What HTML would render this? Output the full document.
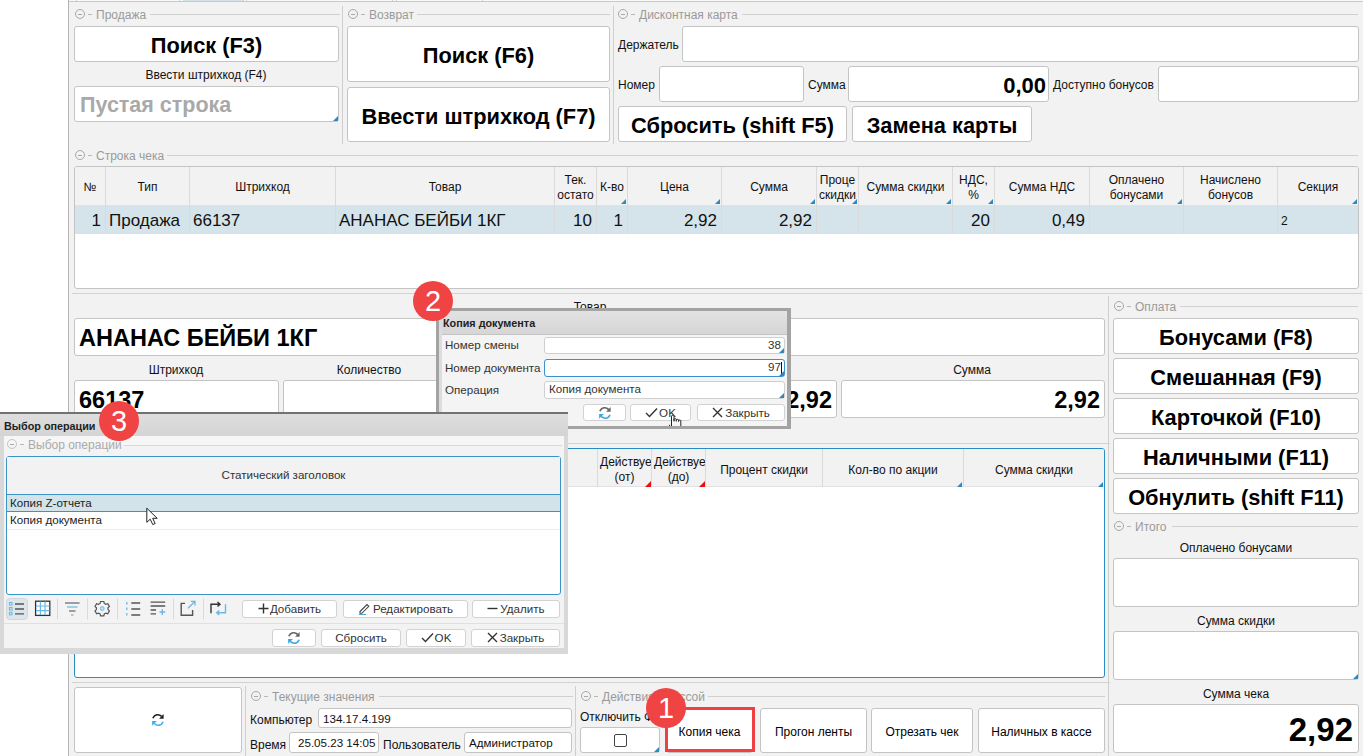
<!DOCTYPE html>
<html><head><meta charset="utf-8">
<style>
*{box-sizing:border-box;margin:0;padding:0}
html,body{width:1363px;height:756px;overflow:hidden;background:#fff;font-family:"Liberation Sans",sans-serif;color:#111}
.a{position:absolute}
#main{position:absolute;left:68px;top:0;width:1295px;height:756px;background:#f2f2f2;border-left:1px solid #b4b4b4}
.hl{position:absolute;height:1px;background:#d2d2d2}
.vl{position:absolute;width:1px;background:#cfcfcf}
.gt{position:absolute;height:14px;font-size:12px;color:#9a9a9a;white-space:nowrap;line-height:14px}
.gt .ic{position:absolute;left:0;top:2px;width:10px;height:10px;border:1px solid #a8a8a8;border-radius:50%}
.gt .ic:after{content:"";position:absolute;left:2px;top:3.5px;width:4px;height:1px;background:#a8a8a8}
.gt .ds{position:absolute;left:13px;top:7px;width:4px;height:1px;background:#b8b8b8}
.gt .tx{position:absolute;left:21px;top:1px}
.gt .ln{position:absolute;top:7px;height:1px;background:#d0d0d0;right:0}
.btn{position:absolute;background:#fff;border:1px solid #c4c4c4;border-radius:3px;font-weight:bold;font-size:21.8px;padding-top:2px;text-align:center;white-space:nowrap;color:#000}
.inp{position:absolute;background:#fff;border:1px solid #c4c4c4;border-radius:3px;white-space:nowrap;overflow:hidden}
.lbl{position:absolute;font-size:12px;white-space:nowrap;color:#111;line-height:14px}
.tri{position:absolute;width:0;height:0;border-style:solid;border-width:0 0 5px 5px;border-color:transparent transparent #2a8ac2 transparent}
.trir{position:absolute;width:0;height:0;border-style:solid;border-width:0 0 6px 6px;border-color:transparent transparent #e81010 transparent}
.th{position:absolute;font-size:12px;color:#111;text-align:center;line-height:15.5px;overflow:hidden;white-space:nowrap;padding:0 2px}
.td{position:absolute;font-size:17px;color:#111;line-height:20px;white-space:nowrap}
.cs{position:absolute;width:1px;background:#dadada}
.badge{position:absolute;width:40px;height:40px;border-radius:50%;background:#f04344;color:#fff;font-size:29px;text-align:center;line-height:40px}
.dl{font-family:"Liberation Sans",sans-serif}
</style></head><body>
<div id="main"></div>
<!-- top strip -->
<div class="a" style="left:69px;top:0;width:1294px;height:1px;background:#fafafa"></div>
<div class="a" style="left:183px;top:0;width:60px;height:1px;background:#d4e4ea"></div>
<div class="a" style="left:69px;top:1px;width:1294px;height:1px;background:#c8c8c8"></div>
<div class="a" style="left:76px;top:0;width:1px;height:1px;background:#d0d0d0"></div>
<div class="a" style="left:179px;top:0;width:1px;height:1px;background:#d0d0d0"></div>
<div class="a" style="left:243px;top:0;width:1px;height:1px;background:#d0d0d0"></div>
<div class="a" style="left:246px;top:0;width:1px;height:1px;background:#d0d0d0"></div>
<div class="a" style="left:392px;top:0;width:1px;height:1px;background:#d0d0d0"></div>
<div class="a" style="left:396px;top:0;width:1px;height:1px;background:#d0d0d0"></div>
<div class="a" style="left:482px;top:0;width:1px;height:1px;background:#d0d0d0"></div>

<div class="gt" style="left:75px;top:7px;width:265px"><div class="ic"></div><div class="ds"></div><div class="tx">Продажа</div><div class="ln" style="left:75px"></div></div>
<div class="btn" style="left:74px;top:26px;width:265px;height:36px;line-height:34px;">Поиск (F3)</div>
<div class="lbl" style="left:56px;width:300px;text-align:center;top:68px;">Ввести штрихкод (F4)</div>
<div class="inp" style="left:74px;top:86px;width:265px;height:36px;"><div style="position:absolute;left:5px;top:6px;font-weight:bold;font-size:21.5px;color:#a9a9a9">Пустая строка</div></div>
<div class="tri" style="left:333px;top:116px"></div>
<div class="vl" style="left:342px;top:6px;height:138px"></div>
<div class="gt" style="left:348px;top:7px;width:262px"><div class="ic"></div><div class="ds"></div><div class="tx">Возврат</div><div class="ln" style="left:69px"></div></div>
<div class="btn" style="left:347px;top:26px;width:263px;height:56px;line-height:54px;">Поиск (F6)</div>
<div class="btn" style="left:347px;top:87px;width:263px;height:55px;line-height:53px;">Ввести штрихкод (F7)</div>
<div class="vl" style="left:613px;top:6px;height:138px"></div>
<div class="gt" style="left:618px;top:7px;width:740px"><div class="ic"></div><div class="ds"></div><div class="tx">Дисконтная карта</div><div class="ln" style="left:124px"></div></div>
<div class="lbl" style="left:618px;top:38px;">Держатель</div>
<div class="inp" style="left:682px;top:26px;width:677px;height:36px;"></div>
<div class="lbl" style="left:618px;top:78px;">Номер</div>
<div class="inp" style="left:659px;top:66px;width:145px;height:36px;"></div>
<div class="lbl" style="left:808px;top:78px;">Сумма</div>
<div class="inp" style="left:848px;top:66px;width:201px;height:36px;"><div style="position:absolute;right:2px;top:6px;font-weight:bold;font-size:22px;color:#000">0,00</div></div>
<div class="lbl" style="left:1053px;top:78px;">Доступно бонусов</div>
<div class="inp" style="left:1158px;top:66px;width:201px;height:36px;"></div>
<div class="btn" style="left:618px;top:106px;width:229px;height:36px;line-height:34px;">Сбросить (shift F5)</div>
<div class="btn" style="left:852px;top:106px;width:180px;height:36px;line-height:34px;">Замена карты</div>
<div class="gt" style="left:75px;top:148px;width:1283px"><div class="ic"></div><div class="ds"></div><div class="tx">Строка чека</div><div class="ln" style="left:92px"></div></div>
<div class="a" style="left:74px;top:166px;width:1285px;height:123px;background:#fff;border:1px solid #c4c4c4;border-radius:3px;overflow:hidden">
<div class="a" style="left:0;top:0;width:1285px;height:39px;background:#f2f2f2;border-bottom:1px solid #e2e2e2"></div>
<div class="a" style="left:0;top:39px;width:1285px;height:28px;background:#d4e4ea"></div>
</div>
<div class="cs" style="left:105px;top:167px;height:67px"></div>
<div class="cs" style="left:189px;top:167px;height:67px"></div>
<div class="cs" style="left:335px;top:167px;height:67px"></div>
<div class="cs" style="left:554px;top:167px;height:67px"></div>
<div class="cs" style="left:596px;top:167px;height:67px"></div>
<div class="cs" style="left:627px;top:167px;height:67px"></div>
<div class="cs" style="left:721px;top:167px;height:67px"></div>
<div class="cs" style="left:816px;top:167px;height:67px"></div>
<div class="cs" style="left:858px;top:167px;height:67px"></div>
<div class="cs" style="left:952px;top:167px;height:67px"></div>
<div class="cs" style="left:994px;top:167px;height:67px"></div>
<div class="cs" style="left:1089px;top:167px;height:67px"></div>
<div class="cs" style="left:1183px;top:167px;height:67px"></div>
<div class="cs" style="left:1277px;top:167px;height:67px"></div>
<div class="th" style="left:75px;top:179.5px;width:30px">№</div>
<div class="th" style="left:106px;top:179.5px;width:83px">Тип</div>
<div class="th" style="left:190px;top:179.5px;width:145px">Штрихкод</div>
<div class="th" style="left:336px;top:179.5px;width:218px">Товар</div>
<div class="th" style="left:555px;top:172.5px;width:41px">Тек.<br>остато</div>
<div class="th" style="left:597px;top:179.5px;width:30px">К-во</div>
<div class="th" style="left:628px;top:179.5px;width:93px">Цена</div>
<div class="th" style="left:722px;top:179.5px;width:94px">Сумма</div>
<div class="th" style="left:817px;top:172.5px;width:41px">Проце<br>скидки</div>
<div class="th" style="left:859px;top:179.5px;width:93px">Сумма скидки</div>
<div class="th" style="left:953px;top:172.5px;width:41px">НДС,<br>%</div>
<div class="th" style="left:995px;top:179.5px;width:94px">Сумма НДС</div>
<div class="th" style="left:1090px;top:172.5px;width:93px">Оплачено<br>бонусами</div>
<div class="th" style="left:1184px;top:172.5px;width:93px">Начислено<br>бонусов</div>
<div class="th" style="left:1278px;top:179.5px;width:80px">Секция</div>
<div class="tri" style="left:621px;top:199px"></div>
<div class="tri" style="left:715px;top:199px"></div>
<div class="tri" style="left:810px;top:199px"></div>
<div class="tri" style="left:852px;top:199px"></div>
<div class="tri" style="left:946px;top:199px"></div>
<div class="tri" style="left:988px;top:199px"></div>
<div class="tri" style="left:1177px;top:199px"></div>
<div class="tri" style="left:1352px;top:199px"></div>
<div class="td" style="left:75px;width:26px;text-align:right;top:211px">1</div>
<div class="td" style="left:109px;top:211px;">Продажа</div>
<div class="td" style="left:193px;top:211px;">66137</div>
<div class="td" style="left:339px;top:211px;">АНАНАС БЕЙБИ 1КГ</div>
<div class="td" style="left:555px;width:37px;text-align:right;top:211px">10</div>
<div class="td" style="left:597px;width:26px;text-align:right;top:211px">1</div>
<div class="td" style="left:628px;width:89px;text-align:right;top:211px">2,92</div>
<div class="td" style="left:722px;width:90px;text-align:right;top:211px">2,92</div>
<div class="td" style="left:953px;width:37px;text-align:right;top:211px">20</div>
<div class="td" style="left:995px;width:90px;text-align:right;top:211px">0,49</div>
<div class="td" style="left:1281px;top:211px;font-size:12px;">2</div>
<div class="hl" style="left:72px;top:293px;width:1290px"></div>
<div class="lbl" style="left:440px;width:300px;text-align:center;top:300px;">Товар</div>
<div class="inp" style="left:74px;top:318px;width:1031px;height:38px;"><div style="position:absolute;left:4px;top:6px;font-weight:bold;font-size:23.5px;color:#000">АНАНАС БЕЙБИ 1КГ</div></div>
<div class="lbl" style="left:26px;width:300px;text-align:center;top:363px;">Штрихкод</div>
<div class="lbl" style="left:219px;width:300px;text-align:center;top:363px;">Количество</div>
<div class="lbl" style="left:498px;width:300px;text-align:center;top:363px;">Цена</div>
<div class="lbl" style="left:822px;width:300px;text-align:center;top:363px;">Сумма</div>
<div class="inp" style="left:74px;top:380px;width:205px;height:38px;"><div style="position:absolute;left:4px;top:6px;font-weight:bold;font-size:23.5px;color:#000">66137</div></div>
<div class="inp" style="left:283px;top:380px;width:172px;height:38px;"></div>
<div class="inp" style="left:459px;top:380px;width:378px;height:38px;"><div style="position:absolute;right:4px;top:6px;font-weight:bold;font-size:23.5px;color:#000">2,92</div></div>
<div class="inp" style="left:841px;top:380px;width:264px;height:38px;"><div style="position:absolute;right:4px;top:6px;font-weight:bold;font-size:23.5px;color:#000">2,92</div></div>
<div class="hl" style="left:72px;top:443px;width:1038px"></div>
<div class="vl" style="left:1108px;top:296px;height:460px"></div>
<div class="a" style="left:74px;top:448px;width:1031px;height:230px;background:#fff;border:1px solid #2a8cc4;border-radius:3px;overflow:hidden">
<div class="a" style="left:0;top:0;width:1031px;height:38px;background:#f2f2f2;border-bottom:1px solid #e2e2e2"></div>
</div>
<div class="cs" style="left:200px;top:449px;height:38px"></div>
<div class="cs" style="left:300px;top:449px;height:38px"></div>
<div class="cs" style="left:400px;top:449px;height:38px"></div>
<div class="cs" style="left:500px;top:449px;height:38px"></div>
<div class="cs" style="left:597px;top:449px;height:38px"></div>
<div class="cs" style="left:651px;top:449px;height:38px"></div>
<div class="cs" style="left:705px;top:449px;height:38px"></div>
<div class="cs" style="left:822px;top:449px;height:38px"></div>
<div class="cs" style="left:963px;top:449px;height:38px"></div>
<div class="th" style="left:598px;top:454.5px;width:53px">Действует<br>(от)</div>
<div class="th" style="left:652px;top:454.5px;width:53px">Действует<br>(до)</div>
<div class="th" style="left:706px;top:462.5px;width:116px">Процент скидки</div>
<div class="th" style="left:823px;top:462.5px;width:140px">Кол-во по акции</div>
<div class="th" style="left:964px;top:462.5px;width:140px">Сумма скидки</div>
<div class="trir" style="left:645px;top:481px"></div>
<div class="trir" style="left:699px;top:481px"></div>
<div class="tri" style="left:957px;top:482px"></div>
<div class="tri" style="left:1098px;top:482px"></div>
<div class="hl" style="left:72px;top:682px;width:1038px"></div>
<div class="inp" style="left:74px;top:687px;width:168px;height:66px"></div>
<svg class="a" style="left:145px;top:705px" width="25" height="30" viewBox="145 705 25 30"><path d="M152.9 718.3C154.5 714.2 159 713.6 161.8 716.6" fill="none" stroke="#222" stroke-width="1.5"/><path d="M163.6 714.1V718.8H159.1Z" fill="#222"/><path d="M163 721.8C161.6 725.8 157.2 726.4 154.3 723.4" fill="none" stroke="#3ab0ea" stroke-width="1.5"/><path d="M152.1 720.9H156.9L152.1 725.7Z" fill="#3ab0ea"/></svg>
<div class="vl" style="left:245px;top:686px;height:70px"></div>
<div class="gt" style="left:251px;top:689px;width:322px"><div class="ic"></div><div class="ds"></div><div class="tx">Текущие значения</div><div class="ln" style="left:128px"></div></div>
<div class="lbl" style="left:250px;top:713px;">Компьютер</div>
<div class="inp" style="left:318px;top:708px;width:254px;height:20px;"><div class="lbl" style="left:4px;top:3px;font-size:11.6px">134.17.4.199</div></div>
<div class="lbl" style="left:250px;top:738px;">Время</div>
<div class="inp" style="left:289px;top:732px;width:90px;height:21px;"><div class="lbl" style="left:8px;top:3px;font-size:11.6px">25.05.23 14:05</div></div>
<div class="lbl" style="left:383px;top:738px;">Пользователь</div>
<div class="inp" style="left:464px;top:732px;width:108px;height:21px;"><div class="lbl" style="left:4px;top:3px;font-size:11.6px">Администратор</div></div>
<div class="vl" style="left:575px;top:686px;height:70px"></div>
<div class="gt" style="left:581px;top:689px;width:524px"><div class="ic"></div><div class="ds"></div><div class="tx">Действия с кассой</div><div class="ln" style="left:127px"></div></div>
<div class="lbl" style="left:580px;top:710px;">Отключить ФР?</div>
<div class="inp" style="left:580px;top:727px;width:80px;height:26px;"><div class="a" style="left:33px;top:6px;width:13px;height:13px;border:1px solid #444;border-radius:2px;background:#fff"></div></div>
<div class="tri" style="left:654px;top:747px"></div>
<div class="btn" style="left:666px;top:708px;width:87px;height:45px;line-height:44px;padding-top:1px;font-weight:normal;font-size:12px">Копия чека</div>
<div class="btn" style="left:760px;top:708px;width:107px;height:45px;line-height:44px;padding-top:1px;font-weight:normal;font-size:12px">Прогон ленты</div>
<div class="btn" style="left:871px;top:708px;width:102px;height:45px;line-height:44px;padding-top:1px;font-weight:normal;font-size:12px">Отрезать чек</div>
<div class="btn" style="left:978px;top:708px;width:127px;height:45px;line-height:44px;padding-top:1px;font-weight:normal;font-size:12px">Наличных в кассе</div>
<div class="gt" style="left:1114px;top:299px;width:244px"><div class="ic"></div><div class="ds"></div><div class="tx">Оплата</div><div class="ln" style="left:66px"></div></div>
<div class="btn" style="left:1113px;top:318px;width:246px;height:36px;line-height:34px;">Бонусами (F8)</div>
<div class="btn" style="left:1113px;top:358px;width:246px;height:36px;line-height:34px;">Смешанная (F9)</div>
<div class="btn" style="left:1113px;top:398px;width:246px;height:36px;line-height:34px;">Карточкой (F10)</div>
<div class="btn" style="left:1113px;top:438px;width:246px;height:36px;line-height:34px;">Наличными (F11)</div>
<div class="btn" style="left:1113px;top:478px;width:246px;height:36px;line-height:34px;">Обнулить (shift F11)</div>
<div class="gt" style="left:1114px;top:519px;width:244px"><div class="ic"></div><div class="ds"></div><div class="tx">Итого</div><div class="ln" style="left:58px"></div></div>
<div class="lbl" style="left:1086px;width:300px;text-align:center;top:541px;">Оплачено бонусами</div>
<div class="inp" style="left:1113px;top:558px;width:246px;height:49px;"></div>
<div class="lbl" style="left:1086px;width:300px;text-align:center;top:614px;">Сумма скидки</div>
<div class="inp" style="left:1113px;top:631px;width:246px;height:49px;"></div>
<div class="tri" style="left:1353px;top:674px"></div>
<div class="lbl" style="left:1086px;width:300px;text-align:center;top:687px;">Сумма чека</div>
<div class="inp" style="left:1113px;top:704px;width:246px;height:49px;"><div style="position:absolute;right:5px;top:6px;font-weight:bold;font-size:33px;color:#000">2,92</div></div>
<div class="a" style="left:436px;top:308px;width:355px;height:121px;background:#a3a3a3"></div>
<div class="a" style="left:439px;top:311px;width:348px;height:115px;background:#dcdcdc"></div>
<div class="a" style="left:442px;top:311px;width:345px;height:23px;background:linear-gradient(#e2e2e2,#d6d6d6)"></div>
<div class="a" style="left:442px;top:334px;width:345px;height:1px;background:#c4c4c4"></div>
<div class="a" style="left:442px;top:335px;width:345px;height:91px;background:#f4f4f4"></div>
<div class="a" style="left:443px;top:317px;font-weight:bold;font-size:10.8px;color:#222;font-family:"Liberation Sans",sans-serif;">Копия документа</div>
<div class="a" style="left:445px;top:338px;font-size:11.6px;color:#333;font-family:"Liberation Sans",sans-serif;">Номер смены</div>
<div class="a" style="left:445px;top:361px;font-size:11.6px;color:#333;font-family:"Liberation Sans",sans-serif;">Номер документа</div>
<div class="a" style="left:445px;top:383px;font-size:11.6px;color:#333;font-family:"Liberation Sans",sans-serif;">Операция</div>
<div class="a" style="left:544px;top:337px;width:241px;height:17px;background:#fff;border:1px solid #cfcfcf;border-radius:3px"></div>
<div class="a" style="left:759px;top:338px;width:22px;text-align:right;font-size:11.6px;color:#333;font-family:"Liberation Sans",sans-serif;">38</div>
<div class="tri" style="left:779px;top:348px"></div>
<div class="a" style="left:544px;top:359px;width:241px;height:18px;background:#fff;border:1.5px solid #3a8fcf;border-radius:3px"></div>
<div class="a" style="left:759px;top:360px;width:22px;text-align:right;font-size:11.6px;color:#333;font-family:"Liberation Sans",sans-serif;">97</div>
<div class="a" style="left:781px;top:362px;width:1px;height:13px;background:#111"></div>
<div class="tri" style="left:779px;top:371px"></div>
<div class="a" style="left:544px;top:381px;width:241px;height:18px;background:#fff;border:1px solid #cfcfcf;border-radius:3px"></div>
<div class="a" style="left:549px;top:382px;font-size:11.6px;color:#333;font-family:"Liberation Sans",sans-serif;">Копия документа</div>
<div class="tri" style="left:779px;top:393px"></div>
<div class="a" style="left:583px;top:404px;width:43px;height:17px;background:#fff;border:1px solid #d2d2d2;border-radius:3px;text-align:center;font-size:11.6px;color:#333;line-height:15px;white-space:nowrap;font-family:"Liberation Sans",sans-serif;"><svg width="14" height="14" viewBox="151 713 14 14" style="vertical-align:middle;margin-top:-2px"><path d="M152.9 718.3C154.5 714.2 159 713.6 161.8 716.6" fill="none" stroke="#666" stroke-width="1.6"/><path d="M163.6 714.1V718.8H159.1Z" fill="#666"/><path d="M163 721.8C161.6 725.8 157.2 726.4 154.3 723.4" fill="none" stroke="#3aa8e0" stroke-width="1.6"/><path d="M152.1 720.9H156.9L152.1 725.7Z" fill="#3aa8e0"/></svg></div>
<div class="a" style="left:630px;top:404px;width:61px;height:17px;background:#fff;border:1px solid #d2d2d2;border-radius:3px;text-align:center;font-size:11.6px;color:#333;line-height:15px;white-space:nowrap;font-family:"Liberation Sans",sans-serif;background:#f8f9fa;border-color:#a4c4d8;line-height:17px"><svg width="13" height="11" viewBox="0 0 13 11" style="vertical-align:middle;margin-top:-3px;margin-right:1px"><path d="M1 6 L4.5 9.5 L12 1.5" fill="none" stroke="#333" stroke-width="1.4"/></svg>OK</div>
<div class="a" style="left:697px;top:404px;width:88px;height:17px;background:#fff;border:1px solid #d2d2d2;border-radius:3px;text-align:center;font-size:11.6px;color:#333;line-height:15px;white-space:nowrap;font-family:"Liberation Sans",sans-serif;"><svg width="11" height="11" viewBox="0 0 11 11" style="vertical-align:middle;margin-top:-3px;margin-right:2px"><path d="M1 1 L10 10 M10 1 L1 10" fill="none" stroke="#333" stroke-width="1.4"/></svg>Закрыть</div>
<div class="a" style="left:0;top:412px;width:568px;height:242px;background:#d8d8d8"></div>
<div class="a" style="left:0;top:412px;width:568px;height:2px;background:#727272"></div>
<div class="a" style="left:0;top:414px;width:568px;height:22px;background:linear-gradient(#dedede,#d4d4d4)"></div>
<div class="a" style="left:4px;top:436px;width:560px;height:212px;background:#f3f3f3"></div>
<div class="a" style="left:4px;top:436px;width:560px;height:9px;background:#f6f6f6"></div>
<div class="a" style="left:4px;top:420px;font-weight:bold;font-size:10.8px;color:#222;font-family:"Liberation Sans",sans-serif;">Выбор операции</div>
<div class="gt" style="left:7px;top:437px;width:555px;color:#aaa;font-family:"Liberation Sans",sans-serif;;font-size:11.6px"><div class="ic" style="border-color:#c4c4c4"></div><div class="ds"></div><div class="tx">Выбор операции</div><div class="ln" style="left:117px;top:8px;background:#d8d8d8"></div></div>
<div class="a" style="left:6px;top:456px;width:555px;height:139px;background:#fff;border:1px solid #3b93c6;border-radius:3px;overflow:hidden"></div>
<div class="a" style="left:7px;top:457px;width:553px;height:37px;background:#f2f2f2"></div>
<div class="a" style="left:7px;top:468px;width:553px;text-align:center;font-size:11.6px;color:#333;font-family:"Liberation Sans",sans-serif;">Статический заголовок</div>
<div class="a" style="left:7px;top:494px;width:553px;height:18px;background:#d3e3ea;border-top:1px solid #3b93c6;border-bottom:1px solid #3b93c6"></div>
<div class="a" style="left:10px;top:496px;font-size:11.6px;color:#222;font-family:"Liberation Sans",sans-serif;">Копия Z-отчета</div>
<div class="a" style="left:7px;top:529px;width:553px;height:1px;background:#ececec"></div>
<div class="a" style="left:10px;top:513px;font-size:11.6px;color:#222;font-family:"Liberation Sans",sans-serif;">Копия документа</div>
<div class="a" style="left:4px;top:623px;width:560px;height:1px;background:#e0e0e0"></div>
<svg class="a" style="left:0;top:592px" width="240" height="34" viewBox="0 592 240 34"><rect x="6.5" y="598.5" width="21" height="21" rx="3" fill="#dde4ea" stroke="#cfd7de"/><rect x="9.5" y="602.5" width="2.5" height="2.5" fill="none" stroke="#6ab8e6" stroke-width="1"/><rect x="9.5" y="607.5" width="2.5" height="2.5" fill="none" stroke="#6ab8e6" stroke-width="1"/><rect x="9.5" y="612.3" width="2.5" height="2.5" fill="none" stroke="#6ab8e6" stroke-width="1"/><path d="M15 604H24M15 609H24M15 613.8H24" stroke="#555" stroke-width="1.3"/><rect x="35.6" y="601.2" width="14.2" height="14.2" fill="#fff" stroke="#333" stroke-width="1.3"/><path d="M40.4 601.5V615M45 601.5V615M36 606H49.5M36 610.6H49.5" stroke="#6ab8e6" stroke-width="1.2"/><path d="M65 603H79.5" stroke="#666" stroke-width="1.2"/><path d="M67 607H77.5" stroke="#6ab8e6" stroke-width="1.2"/><path d="M69 611H75.5" stroke="#666" stroke-width="1.2"/><path d="M71 615H73.5" stroke="#6ab8e6" stroke-width="1.2"/><path d="M100.6 601.5h3.2l.5 1.9 1.6.9 1.9-.6 1.6 2.8-1.4 1.3v1.8l1.4 1.3-1.6 2.8-1.9-.6-1.6.9-.5 1.9h-3.2l-.5-1.9-1.6-.9-1.9.6-1.6-2.8 1.4-1.3v-1.8l-1.4-1.3 1.6-2.8 1.9.6 1.6-.9z" fill="none" stroke="#555" stroke-width="1.2"/><circle cx="102.2" cy="608.5" r="1.9" fill="#bfe3f7" stroke="#6ab8e6" stroke-width="1"/><path d="M126.8 602V604.5M126.8 607.5V610M126.8 613V615.5" stroke="#6ab8e6" stroke-width="1.3"/><path d="M131.3 603H140.2M131.3 609H140.2M131.3 615H140.2" stroke="#555" stroke-width="1.4"/><path d="M150.6 602.2H165.2M150.6 606H165.2M150.6 610H156M150.6 613.8H156" stroke="#555" stroke-width="1.3"/><path d="M162.3 609.2V615M159.5 612H165.2" stroke="#6ab8e6" stroke-width="1.4"/><path d="M185 603.4H181.2V615.3H192.6V610" fill="none" stroke="#555" stroke-width="1.4"/><path d="M188 608.3L195 601.3M190.8 601.3H195V605.5" fill="none" stroke="#6ab8e6" stroke-width="1.3"/><path d="M211 613.2V604.3H219.5M217.5 602L220 604.3 217.5 606.6" fill="none" stroke="#333" stroke-width="1.4"/><path d="M225.5 604.3V612.7H217M219.2 610.4L216.7 612.7 219.2 615" fill="none" stroke="#6ab8e6" stroke-width="1.4"/><path d="M57.5 598.5V619.5" stroke="#dadada" stroke-width="1"/><path d="M87.5 598.5V619.5" stroke="#dadada" stroke-width="1"/><path d="M117.5 598.5V619.5" stroke="#dadada" stroke-width="1"/><path d="M173.5 598.5V619.5" stroke="#dadada" stroke-width="1"/><path d="M203.5 598.5V619.5" stroke="#dadada" stroke-width="1"/></svg>
<div class="a" style="left:242px;top:600px;width:95px;height:18px;background:#fff;border:1px solid #d2d2d2;border-radius:3px;text-align:center;font-size:11.6px;color:#333;line-height:16px;white-space:nowrap;font-family:"Liberation Sans",sans-serif;"><svg width="11" height="11" viewBox="0 0 11 11" style="vertical-align:middle;margin-top:-3px;margin-right:1px"><path d="M5.5 0.5V10.5M0.5 5.5H10.5" stroke="#333" stroke-width="1.4"/></svg>Добавить</div>
<div class="a" style="left:343px;top:600px;width:125px;height:18px;background:#fff;border:1px solid #d2d2d2;border-radius:3px;text-align:center;font-size:11.6px;color:#333;line-height:16px;white-space:nowrap;font-family:"Liberation Sans",sans-serif;"><svg width="13" height="13" viewBox="0 0 13 13" style="vertical-align:middle;margin-top:-3px;margin-right:2px"><path d="M2 9.5L9 2.5 10.8 4.3 3.8 11.3H2z" fill="none" stroke="#444" stroke-width="1.1"/><path d="M1 12.5H8" stroke="#4aa8dc" stroke-width="1.2"/></svg>Редактировать</div>
<div class="a" style="left:472px;top:600px;width:88px;height:18px;background:#fff;border:1px solid #d2d2d2;border-radius:3px;text-align:center;font-size:11.6px;color:#333;line-height:16px;white-space:nowrap;font-family:"Liberation Sans",sans-serif;"><svg width="11" height="11" viewBox="0 0 11 11" style="vertical-align:middle;margin-top:-3px;margin-right:2px"><path d="M0.5 5.5H10.5" stroke="#333" stroke-width="1.4"/></svg>Удалить</div>
<div class="a" style="left:272px;top:629px;width:44px;height:18px;background:#fff;border:1px solid #d2d2d2;border-radius:3px;text-align:center;font-size:11.6px;color:#333;line-height:16px;white-space:nowrap;font-family:"Liberation Sans",sans-serif;"><svg width="14" height="14" viewBox="151 713 14 14" style="vertical-align:middle;margin-top:-2px"><path d="M152.9 718.3C154.5 714.2 159 713.6 161.8 716.6" fill="none" stroke="#666" stroke-width="1.6"/><path d="M163.6 714.1V718.8H159.1Z" fill="#666"/><path d="M163 721.8C161.6 725.8 157.2 726.4 154.3 723.4" fill="none" stroke="#3aa8e0" stroke-width="1.6"/><path d="M152.1 720.9H156.9L152.1 725.7Z" fill="#3aa8e0"/></svg></div>
<div class="a" style="left:321px;top:629px;width:80px;height:18px;background:#fff;border:1px solid #d2d2d2;border-radius:3px;text-align:center;font-size:11.6px;color:#333;line-height:16px;white-space:nowrap;font-family:"Liberation Sans",sans-serif;">Сбросить</div>
<div class="a" style="left:406px;top:629px;width:60px;height:18px;background:#fff;border:1px solid #d2d2d2;border-radius:3px;text-align:center;font-size:11.6px;color:#333;line-height:16px;white-space:nowrap;font-family:"Liberation Sans",sans-serif;"><svg width="13" height="11" viewBox="0 0 13 11" style="vertical-align:middle;margin-top:-3px;margin-right:1px"><path d="M1 6 L4.5 9.5 L12 1.5" fill="none" stroke="#333" stroke-width="1.4"/></svg>OK</div>
<div class="a" style="left:471px;top:629px;width:89px;height:18px;background:#fff;border:1px solid #d2d2d2;border-radius:3px;text-align:center;font-size:11.6px;color:#333;line-height:16px;white-space:nowrap;font-family:"Liberation Sans",sans-serif;"><svg width="11" height="11" viewBox="0 0 11 11" style="vertical-align:middle;margin-top:-3px;margin-right:2px"><path d="M1 1 L10 10 M10 1 L1 10" fill="none" stroke="#333" stroke-width="1.4"/></svg>Закрыть</div>
<svg class="a" style="left:140px;top:504px" width="24" height="24" viewBox="140 504 24 24"><path d="M146.8 508.2V522.3L150.2 519.2 152.8 524.6 155.2 523.5 152.7 518.3H157.2Z" fill="#fff" stroke="#222" stroke-width="1" stroke-linejoin="round"/></svg>
<svg class="a" style="left:664px;top:410px" width="24" height="16" viewBox="664 410 24 16"><path d="M671.5 426V416.2C671.5 414.8 674 414.8 674 416.2V421.5M674 421V419.5C674 418.3 676.3 418.3 676.3 419.5V421.5M676.3 421V420.2C676.3 419 678.6 419 678.6 420.2V421.8M678.6 421.2V420.8C678.6 419.7 680.8 419.7 680.8 420.8V426" fill="#fff" stroke="#222" stroke-width="1"/><path d="M669.6 424.8V426" stroke="#222" stroke-width="1"/></svg>
<div class="a" style="left:665px;top:707px;width:90px;height:45px;border:3px solid #ef3f42"></div>
<div class="badge" style="left:413px;top:281px">2</div>
<div class="badge" style="left:99px;top:401px">3</div>
<div class="badge" style="left:646px;top:688px">1</div>
</body></html>
